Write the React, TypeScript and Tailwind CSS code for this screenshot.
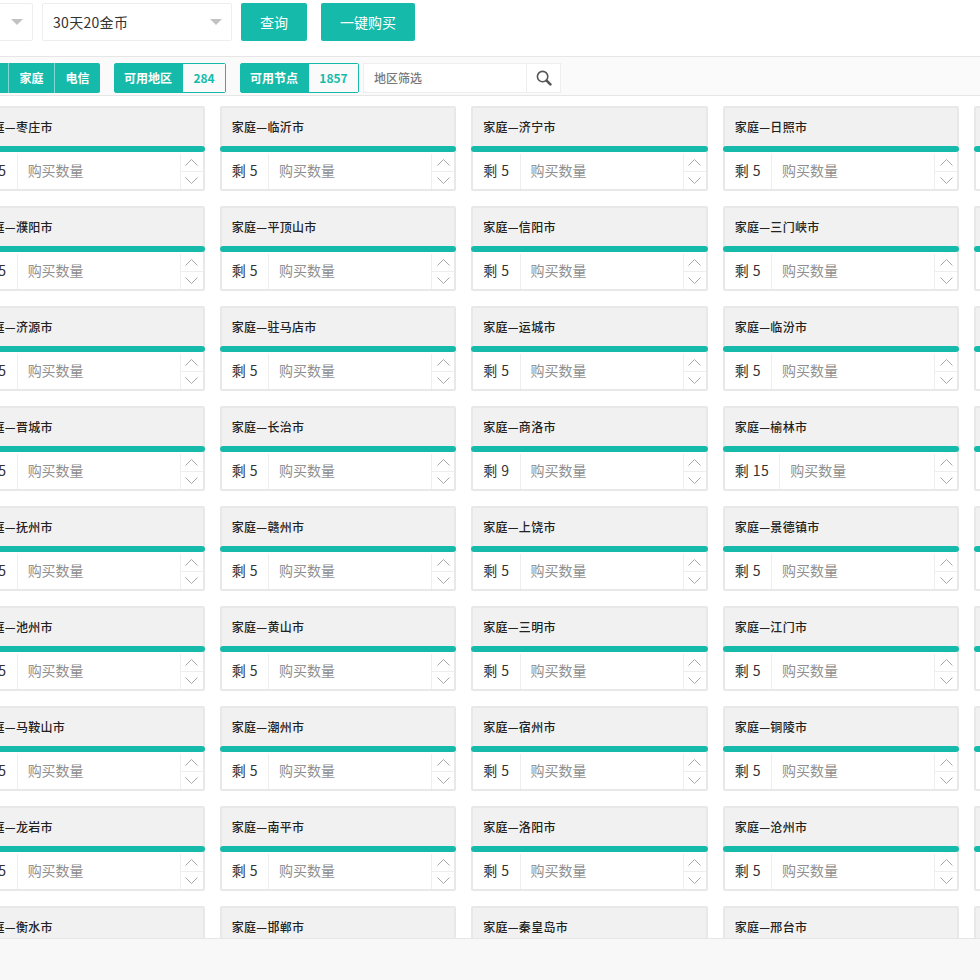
const rows: [string, number][][] = [
  [["枣庄市", 5], ["临沂市", 5], ["济宁市", 5], ["日照市", 5], ["", 5]],
  [["濮阳市", 5], ["平顶山市", 5], ["信阳市", 5], ["三门峡市", 5], ["", 5]],
  [["济源市", 5], ["驻马店市", 5], ["运城市", 5], ["临汾市", 5], ["", 5]],
  [["晋城市", 5], ["长治市", 5], ["商洛市", 9], ["榆林市", 15], ["", 5]],
  [["抚州市", 5], ["赣州市", 5], ["上饶市", 5], ["景德镇市", 5], ["", 5]],
  [["池州市", 5], ["黄山市", 5], ["三明市", 5], ["江门市", 5], ["", 5]],
  [["马鞍山市", 5], ["潮州市", 5], ["宿州市", 5], ["铜陵市", 5], ["", 5]],
  [["龙岩市", 5], ["南平市", 5], ["洛阳市", 5], ["沧州市", 5], ["", 5]],
  [["衡水市", 5], ["邯郸市", 5], ["秦皇岛市", 5], ["邢台市", 5], ["", 5]],
];

function Chevron({ up }: { up?: boolean }) {
  return (
    <svg width="13" height="7" viewBox="0 0 13 7" fill="none" stroke="#a8a8a8" strokeWidth="1">
      <polyline points={up ? "0.5,6.5 6.5,0.5 12.5,6.5" : "0.5,0.5 6.5,6.5 12.5,0.5"} />
    </svg>
  );
}

function Card({ name, left }: { name: string; left: number }) {
  return (
    <div className="h-[85px] border-2 border-[#e8e8e8] bg-white rounded-[2px]">
      <div className="h-[38px] bg-[#f1f1f1] pl-[10px] flex items-center text-[12px] font-medium tracking-[0.3px] text-[#222] whitespace-nowrap">
        {name ? `家庭—${name}` : ""}
      </div>
      <div className="h-[6px] -mx-[2px] bg-[#16baaa] rounded-[3px]" />
      <div className="flex h-[37px]">
        <div className="mt-[2px] border-r border-[#eee] pl-[10px] pr-[10px] pb-[2px] flex items-center text-[14px] tracking-[0.5px] text-[#333] whitespace-nowrap">
          剩 {left}
        </div>
        <div className="flex-1 flex items-center pl-[10px] text-[14px] text-[#8f8f8f] whitespace-nowrap">购买数量</div>
        <div className="w-[23px] flex flex-col border-l border-[#eee] mt-[2px]">
          <div className="flex-1 flex items-center justify-center border-b border-[#eee]"><Chevron up /></div>
          <div className="flex-1 flex items-center justify-center"><Chevron /></div>
        </div>
      </div>
    </div>
  );
}

function Arrow() {
  return <div className="w-0 h-0 border-x-[6px] border-x-transparent border-t-[6px] border-t-[#c2c2c2]" />;
}

function Stat({ label, value, w }: { label: string; value: string; w: string }) {
  return (
    <div className={`flex h-[30px] border border-[#16baaa] rounded-[2px] ${w}`}>
      <div className="bg-[#16baaa] text-white font-bold text-[12px] pl-[9px] pr-[11px] flex items-center whitespace-nowrap">{label}</div>
      <div className="flex-1 bg-[#fafafa] text-[#16baaa] font-bold text-[12px] flex items-center justify-center">{value}</div>
    </div>
  );
}

export default function App() {
  return (
    <div className="w-[980px] h-[980px] overflow-hidden bg-white flex flex-col font-['Noto_Sans_CJK_SC','Noto_Sans',sans-serif]">
      <div className="h-[57px] shrink-0 border-b border-[#e6e6e6] flex items-start pt-[3px] bg-white">
        <div className="w-[33px] h-[38px] border border-l-0 border-[#eeeeee] rounded-r-[2px] flex items-center justify-end pr-[9px]">
          <Arrow />
        </div>
        <div className="ml-[9px] w-[190px] h-[38px] border border-[#eeeeee] rounded-[2px] flex items-center justify-between pl-[10px] pr-[9px] text-[14px] text-[#333]">
          <span className="tracking-[0.3px]">30天20金币</span>
          <Arrow />
        </div>
        <div className="ml-[9px] w-[66px] h-[38px] bg-[#16baaa] rounded-[2px] text-white text-[14px] flex items-center justify-center">查询</div>
        <div className="ml-[14px] w-[94px] h-[38px] bg-[#16baaa] rounded-[2px] text-white text-[14px] flex items-center justify-center">一键购买</div>
      </div>
      <div className="h-[39px] shrink-0 border-b border-[#e6e6e6] bg-[#fafafa] flex items-start pt-[6px]">
        <div className="flex h-[30px] bg-[#16baaa] rounded-r-[2px] text-white font-bold text-[12px]">
          <div className="w-[9px] border-r border-[#7fd9d0]" />
          <div className="w-[46px] border-r border-[#7fd9d0] flex items-center justify-center">家庭</div>
          <div className="w-[45px] flex items-center justify-center">电信</div>
        </div>
        <div className="ml-[14px]"><Stat label="可用地区" value="284" w="w-[112px]" /></div>
        <div className="ml-[14px]"><Stat label="可用节点" value="1857" w="w-[119px]" /></div>
        <div className="ml-[4px] w-[198px] h-[30px] flex border border-[#eeeeee] bg-white">
          <div className="flex-1 pl-[10px] flex items-center text-[12px] font-medium text-[#777]">地区筛选</div>
          <div className="w-[34px] border-l border-[#eeeeee] flex items-center justify-center">
            <svg width="16" height="16" viewBox="0 0 16 16" fill="none">
              <circle cx="6.6" cy="6.6" r="5.2" stroke="#555" strokeWidth="1.6" />
              <line x1="10.6" y1="10.6" x2="14.4" y2="14.4" stroke="#555" strokeWidth="2.6" strokeLinecap="round" />
            </svg>
          </div>
        </div>
      </div>
      <div className="flex-1 min-h-0 overflow-hidden bg-white pt-[10px]">
        <div className="-ml-[31.8px] w-max grid grid-cols-[repeat(5,236.4px)] gap-x-[15.1px] gap-y-[15px]">
          {rows.flat().map(([name, left], i) => (
            <Card key={i} name={name} left={left} />
          ))}
        </div>
      </div>
      <div className="h-[42px] shrink-0 border-t border-[#e6e6e6] bg-[#f8f8f8]" />
    </div>
  );
}
